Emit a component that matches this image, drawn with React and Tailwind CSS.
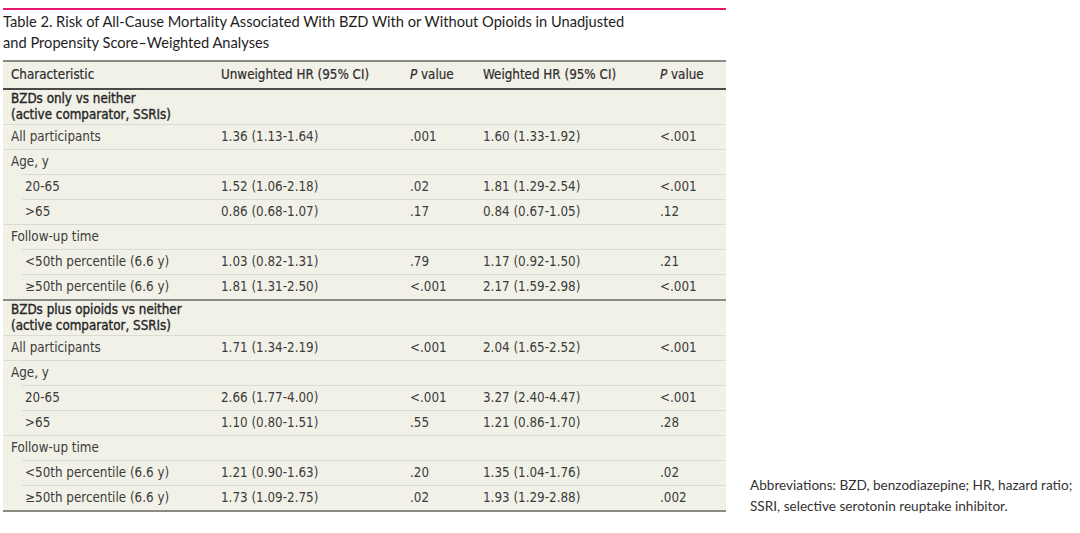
const sections = [
  {
    title: ['BZDs only vs neither', '(active comparator, SSRIs)'],
    rows: [
      { label: 'All participants', u: '1.36 (1.13-1.64)', up: '.001', w: '1.60 (1.33-1.92)', wp: '<.001' },
      { label: 'Age, y' },
      { label: '20-65', indent: true, u: '1.52 (1.06-2.18)', up: '.02', w: '1.81 (1.29-2.54)', wp: '<.001' },
      { label: '>65', indent: true, u: '0.86 (0.68-1.07)', up: '.17', w: '0.84 (0.67-1.05)', wp: '.12' },
      { label: 'Follow-up time' },
      { label: '<50th percentile (6.6 y)', indent: true, u: '1.03 (0.82-1.31)', up: '.79', w: '1.17 (0.92-1.50)', wp: '.21' },
      { label: '≥50th percentile (6.6 y)', indent: true, u: '1.81 (1.31-2.50)', up: '<.001', w: '2.17 (1.59-2.98)', wp: '<.001' },
    ],
  },
  {
    title: ['BZDs plus opioids vs neither', '(active comparator, SSRIs)'],
    rows: [
      { label: 'All participants', u: '1.71 (1.34-2.19)', up: '<.001', w: '2.04 (1.65-2.52)', wp: '<.001' },
      { label: 'Age, y' },
      { label: '20-65', indent: true, u: '2.66 (1.77-4.00)', up: '<.001', w: '3.27 (2.40-4.47)', wp: '<.001' },
      { label: '>65', indent: true, u: '1.10 (0.80-1.51)', up: '.55', w: '1.21 (0.86-1.70)', wp: '.28' },
      { label: 'Follow-up time' },
      { label: '<50th percentile (6.6 y)', indent: true, u: '1.21 (0.90-1.63)', up: '.20', w: '1.35 (1.04-1.76)', wp: '.02' },
      { label: '≥50th percentile (6.6 y)', indent: true, u: '1.73 (1.09-2.75)', up: '.02', w: '1.93 (1.29-2.88)', wp: '.002' },
    ],
  },
];

const tableFont = { fontFamily: '"Liberation Sans Narrow", "DejaVu Sans Condensed", "Roboto", sans-serif' };

function DataRow({ row }) {
  // indented rows pull their top rule in as well, the other columns stay put
  if (row.indent) {
    return (
      <div className="ml-[19px] grid h-[25px] grid-cols-[191px_189px_73px_177px_1fr] items-center border-t border-[#dcdbcf]">
        <div className="pl-[3px]">{row.label}</div>
        <div className="pl-2">{row.u}</div>
        <div className="pl-2">{row.up}</div>
        <div className="pl-2">{row.w}</div>
        <div className="pl-2">{row.wp}</div>
      </div>
    );
  }
  return (
    <div className="grid h-[25px] grid-cols-[210px_189px_73px_177px_1fr] items-center border-t border-[#dcdbcf]">
      <div className="pl-2">{row.label}</div>
      <div className="pl-2">{row.u}</div>
      <div className="pl-2">{row.up}</div>
      <div className="pl-2">{row.w}</div>
      <div className="pl-2">{row.wp}</div>
    </div>
  );
}

export default function App() {
  return (
    <div className="flex h-[533px] w-[1080px] bg-white text-[#3b3b3b]">
      <div className="ml-[3px] w-[723px] pt-[8px]">
        <div className="h-[2px] bg-[#e3186c]" />
        <h2
          className="mt-[1px] text-[14.65px] leading-[21px] text-[#1e1e1e]"
          style={{ fontFamily: 'Lato, "Open Sans", sans-serif' }}
        >
          Table 2. Risk of All-Cause Mortality Associated With BZD With or Without Opioids in Unadjusted
          <br />
          and Propensity Score–Weighted Analyses
        </h2>
        <div className="mt-[7px] border-t-2 border-b-2 border-[#8b8a84] bg-[#f2f1e8] text-[13.3px]" style={tableFont}>
          <div className="grid h-[28px] grid-cols-[210px_189px_73px_177px_1fr] items-center border-b-2 border-[#4a4a48] text-[#2e2e2e] [-webkit-text-stroke:0.2px]">
            <div className="pl-2">Characteristic</div>
            <div className="pl-2">Unweighted HR (95% CI)</div>
            <div className="pl-2"><i>P</i> value</div>
            <div className="pl-2">Weighted HR (95% CI)</div>
            <div className="pl-2"><i>P</i> value</div>
          </div>
          {sections.map((s, i) => (
            <div key={i} className={i > 0 ? 'border-t-2 border-[#8b8a84]' : ''}>
              <div className="flex h-[34px] flex-col justify-center pl-2 leading-[16px] text-[#262626] [-webkit-text-stroke:0.35px]">
                <span>{s.title[0]}</span>
                <span>{s.title[1]}</span>
              </div>
              {s.rows.map((r, j) => (
                <DataRow key={j} row={r} />
              ))}
            </div>
          ))}
        </div>
      </div>
      <div
        className="mb-[16px] ml-[24px] self-end text-[13.6px] leading-[21px] text-[#333]"
        style={{ fontFamily: 'Lato, "Open Sans", sans-serif' }}
      >
        Abbreviations: BZD, benzodiazepine; HR, hazard ratio;
        <br />
        SSRI, selective serotonin reuptake inhibitor.
      </div>
    </div>
  );
}
